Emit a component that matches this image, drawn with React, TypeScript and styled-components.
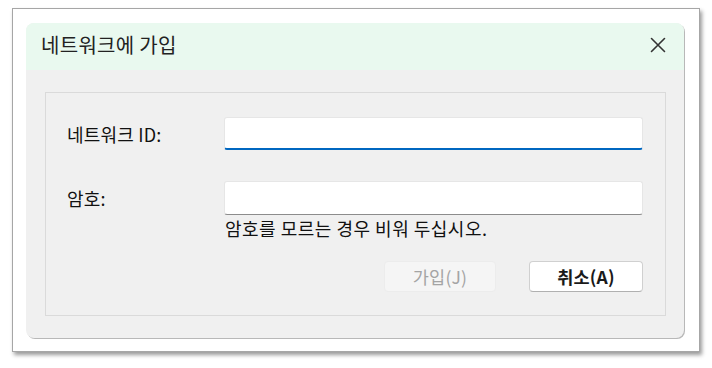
import React from "react";
import styled, { createGlobalStyle } from "styled-components";

const Global = createGlobalStyle`
  html, body { margin: 0; padding: 0; background: #ffffff; }
  body { font-family: "Noto Sans CJK KR", "Noto Sans", sans-serif; }
  * { box-sizing: border-box; }
`;

const Page = styled.div`
  width: 712px;
  height: 368px;
  padding: 8px 0 0 12px;
`;

const Frame = styled.div`
  width: 688px;
  height: 344px;
  background: #ffffff;
  border: 1px solid #a6a6a6;
  box-shadow: 2px 3px 4px rgba(0, 0, 0, 0.4);
  padding: 14px 15px 13px 13px;
  display: flex;
`;

const Dialog = styled.div`
  flex: 1;
  display: flex;
  flex-direction: column;
  background: #f0f0f0;
  border-radius: 8px;
  overflow: hidden;
  box-shadow: 1px 1px 0 #b8b8b8;
`;

const TitleBar = styled.div`
  height: 47px;
  flex: none;
  background: #e9f9ef;
  display: flex;
  align-items: center;
  justify-content: space-between;
  padding: 0 17px 0 15px;
`;

const Title = styled.div`
  font-size: 20px;
  color: #222;
  letter-spacing: 0.3px;
  line-height: 1;
  margin-top: -3px;
`;

const CloseButton = styled.div`
  width: 18px;
  height: 18px;
  display: flex;
  align-items: center;
  justify-content: center;
  margin-top: -3px;
`;

const Body = styled.div`
  flex: 1;
  padding: 22px 20px 22px 19px;
  display: flex;
`;

const Group = styled.div`
  flex: 1;
  border: 1px solid #dadada;
  padding: 24px 22px 0 19px;
  display: flex;
  flex-direction: column;
`;

const Row = styled.div<{ $mt?: number }>`
  display: grid;
  grid-template-columns: 159px 419px;
  align-items: center;
  margin-top: ${(p) => p.$mt ?? 0}px;
`;

const Label = styled.div`
  font-size: 18px;
  color: #111;
  letter-spacing: 0.2px;
  line-height: 1;
  padding: 0 0 0 2px;
`;

const Input = styled.div<{ $focused?: boolean }>`
  height: ${(p) => (p.$focused ? 33 : 34)}px;
  background: #ffffff;
  border: 1px solid #e6e6e6;
  border-bottom: ${(p) => (p.$focused ? "2px solid #0067c0" : "1px solid #8c8c8c")};
  border-radius: 3px;
`;

const Hint = styled.div`
  font-size: 18px;
  color: #111;
  letter-spacing: 0.5px;
  line-height: 1;
  margin: 4px 0 0 160px;
`;

const Buttons = styled.div`
  display: flex;
  justify-content: flex-end;
  gap: 33px;
  margin-top: 24px;
`;

const Button = styled.div<{ $disabled?: boolean }>`
  width: ${(p) => (p.$disabled ? 112 : 114)}px;
  height: 31px;
  border-radius: 4px;
  display: flex;
  align-items: center;
  justify-content: center;
  font-size: 17.5px;
  letter-spacing: 0.2px;
  line-height: 1;
  background: ${(p) => (p.$disabled ? "#f5f5f5" : "#ffffff")};
  border: 1px solid ${(p) => (p.$disabled ? "#ececec" : "#d0d0d0")};
  border-bottom-color: ${(p) => (p.$disabled ? "#ececec" : "#b0b0b0")};
  color: ${(p) => (p.$disabled ? "#a4a4a4" : "#1a1a1a")};
  font-weight: ${(p) => (p.$disabled ? 400 : 600)};
`;

export default function App() {
  return (
    <>
      <Global />
      <Page>
        <Frame>
          <Dialog>
            <TitleBar>
              <Title>네트워크에 가입</Title>
              <CloseButton>
                <svg width="16" height="16" viewBox="0 0 16 16">
                  <path d="M1.5 1.5 L14.5 14.5 M14.5 1.5 L1.5 14.5" stroke="#333" strokeWidth="1.6" strokeLinecap="round" />
                </svg>
              </CloseButton>
            </TitleBar>
            <Body>
              <Group>
                <Row>
                  <Label>네트워크 ID:</Label>
                  <Input $focused />
                </Row>
                <Row $mt={31}>
                  <Label>암호:</Label>
                  <Input />
                </Row>
                <Hint>암호를 모르는 경우 비워 두십시오.</Hint>
                <Buttons>
                  <Button $disabled>가입(J)</Button>
                  <Button>취소(A)</Button>
                </Buttons>
              </Group>
            </Body>
          </Dialog>
        </Frame>
      </Page>
    </>
  );
}
